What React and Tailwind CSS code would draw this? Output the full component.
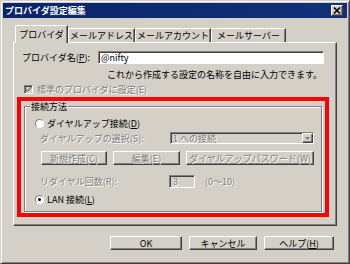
import React from "react";

const font = { fontFamily: '"Noto Sans CJK JP", "Noto Sans", sans-serif' };

function Raised({ className = "", children }) {
  return (
    <div
      className={`flex items-center justify-center border border-t-white border-l-white border-r-[#404040] border-b-[#404040] shadow-[inset_-1px_-1px_0_#808080] bg-[#d4d0c8] ${className}`}
    >
      {children}
    </div>
  );
}

function Sunken({ className = "", children }) {
  return (
    <div
      className={`border border-t-[#808080] border-l-[#808080] border-r-white border-b-white shadow-[inset_1px_1px_0_#404040] ${className}`}
    >
      {children}
    </div>
  );
}

function Radio({ checked }) {
  return (
    <span className="relative flex h-[9px] w-[9px] items-center justify-center rounded-full border border-t-[#808080] border-l-[#808080] border-r-white border-b-white bg-white">
      {checked && <span className="h-[3px] w-[3px] rounded-full bg-black" />}
    </span>
  );
}

const dim = "text-[#808080] [text-shadow:1px_1px_0_#fff]";

export default function App() {
  const tabs = [
    { label: "メールアドレス", w: "w-[67px]" },
    { label: "メールアカウント", w: "w-[76px]" },
    { label: "メールサーバー", w: "w-[75px]" },
  ];

  return (
    <div
      style={font}
      className="flex h-[264px] w-[350px] flex-col overflow-hidden border border-t-[#d4d0c8] border-l-[#d4d0c8] border-r-[#404040] border-b-[#404040] bg-[#d4d0c8] text-[9px] leading-none text-black shadow-[inset_1px_1px_0_#fff,inset_-1px_-1px_0_#808080]"
    >
      {/* title bar */}
      <div className="mx-[2px] mt-[2px] flex h-[15px] items-center justify-between bg-gradient-to-r from-[#0a246a] to-[#12307a] pl-[2px] pr-[4px]">
        <span className="font-bold text-white">プロバイダ設定編集</span>
        <Raised className="h-[11px] w-[12px]">
          <svg width="8" height="7" viewBox="0 0 8 7">
            <path d="M1 0.5 L7 6.5 M7 0.5 L1 6.5" stroke="#000" strokeWidth="1.6" />
          </svg>
        </Raised>
      </div>

      {/* tabs */}
      <div className="mt-[7px] flex h-[17px] items-end pl-[14px]">
        <div className="relative z-10 -mb-[1px] flex h-[18px] w-[53px] items-center justify-center rounded-tl-[2px] border-l border-t border-r border-l-white border-t-white border-r-[#404040] bg-[#d4d0c8] pb-[1px] shadow-[inset_-1px_0_0_#808080]">
          プロバイダ
        </div>
        {tabs.map((t) => (
          <div
            key={t.label}
            className={`flex h-[14px] ${t.w} items-center justify-center rounded-tl-[2px] border-l border-t border-r border-l-white border-t-white border-r-[#404040] shadow-[inset_-1px_0_0_#808080]`}
          >
            {t.label}
          </div>
        ))}
      </div>

      {/* panel */}
      <div className="mx-[12px] flex h-[184px] flex-col border border-t-white border-l-white border-r-[#404040] border-b-[#404040] shadow-[inset_-1px_-1px_0_#808080]">
        <div className="mt-[8px] flex h-[13px] items-center pl-[8px]">
          <span className="w-[76px]">プロバイダ名(<span className="underline">P</span>):</span>
          <Sunken className="flex h-[13px] w-[226px] items-center bg-white pl-[2px]">@nifty</Sunken>
        </div>
        <div className="mt-[6px] pl-[93px]">これから作成する設定の名称を自由に入力できます。</div>
        <div className="mt-[6px] flex items-center pl-[10px]">
          <Sunken className="flex h-[9px] w-[9px] items-center justify-center bg-[#d4d0c8]">
            <svg width="7" height="7" viewBox="0 0 7 7">
              <path d="M0.5 3 L2.5 5 L6.5 1" stroke="#808080" strokeWidth="1.5" fill="none" />
            </svg>
          </Sunken>
          <span className={`ml-[4px] ${dim}`}>標準のプロバイダに設定(E)</span>
        </div>

        {/* red highlight */}
        <div className="ml-[3px] mt-[3px] h-[120px] w-[312px] border-4 border-[#ff0000] px-[3px] pt-[5px]">
          <div className="relative flex h-[106px] flex-col border border-[#808080] shadow-[1px_1px_0_#fff,inset_1px_1px_0_#fff]">
            <span className="absolute -top-[5px] left-[5px] bg-[#d4d0c8] px-[1px]">接続方法</span>

            <div className="mt-[12px] flex items-center pl-[10px]">
              <Radio />
              <span className="ml-[3px]">ダイヤルアップ接続(<span className="underline">D</span>)</span>
            </div>

            <div className="mt-[4px] flex h-[12px] items-center pl-[15px]">
              <span className={`w-[130px] ${dim}`}>ダイヤルアップの選択(S):</span>
              <Sunken className="flex h-[12px] w-[144px] items-center justify-between bg-[#d4d0c8] pl-[2px]">
                <span className={dim}>1 への接続</span>
                <Raised className="h-[10px] w-[11px]">
                  <svg width="5" height="3" viewBox="0 0 5 3">
                    <path d="M0 0 H5 L2.5 3 Z" fill="#808080" />
                  </svg>
                </Raised>
              </Sunken>
            </div>

            <div className="mt-[7px] flex gap-[6px] pl-[16px]">
              <Raised className={`h-[14px] w-[66px] ${dim}`}>新規作成(C)</Raised>
              <Raised className={`h-[14px] w-[67px] ${dim}`}>編集(E)</Raised>
              <Raised className={`h-[14px] w-[128px] ${dim}`}>ダイヤルアップパスワード(W)</Raised>
            </div>

            <div className="mt-[10px] flex h-[13px] items-center pl-[15px]">
              <span className={`w-[129px] ${dim}`}>リダイヤル回数(R):</span>
              <Sunken className={`flex h-[13px] w-[26px] items-center bg-[#d4d0c8] pl-[3px] ${dim}`}>3</Sunken>
              <span className={`ml-[10px] ${dim}`}>(0〜10)</span>
            </div>

            <div className="mt-[7px] flex items-center pl-[10px]">
              <Radio checked />
              <span className="ml-[3px]">LAN 接続(<span className="underline">L</span>)</span>
            </div>
          </div>
        </div>
      </div>

      {/* dialog buttons */}
      <div className="mt-[10px] flex justify-end gap-[7px] pr-[15px]">
        <Raised className="h-[14px] w-[72px]">OK</Raised>
        <Raised className="h-[14px] w-[68px]">キャンセル</Raised>
        <Raised className="h-[14px] w-[70px]">ヘルプ(<span className="underline">H</span>)</Raised>
      </div>
    </div>
  );
}
